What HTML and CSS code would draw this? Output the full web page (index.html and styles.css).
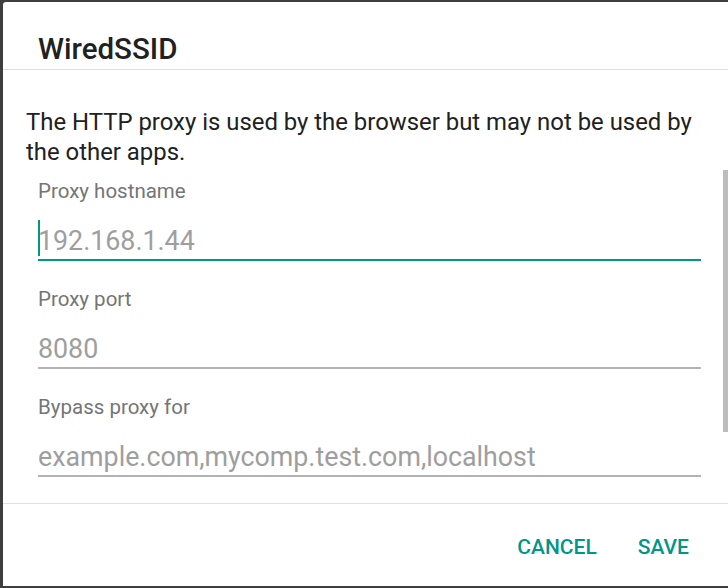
FILE: index.html
```html
<!DOCTYPE html>
<html>
<head>
<meta charset="utf-8">
<link rel="stylesheet" href="styles.css">
</head>
<body>
<div class="dialog">
  <div class="header"><h1 class="title">WiredSSID</h1></div>
  <div class="content">
    <p class="desc">The HTTP proxy is used by the browser but may not be used by the other apps.</p>
    <div class="fields">
      <div class="field">
        <div class="label">Proxy hostname</div>
        <div class="input focused"><span class="cursor"></span><span class="hint">192.168.1.44</span></div>
      </div>
      <div class="field">
        <div class="label">Proxy port</div>
        <div class="input"><span class="hint">8080</span></div>
      </div>
      <div class="field">
        <div class="label">Bypass proxy for</div>
        <div class="input"><span class="hint">example.com,mycomp.test.com,localhost</span></div>
      </div>
    </div>
    <div class="scrollbar"></div>
  </div>
  <div class="footer">
    <button class="btn">CANCEL</button>
    <button class="btn">SAVE</button>
  </div>
</div>
</body>
</html>
```
FILE: styles.css
```css
html, body {
  margin: 0;
  padding: 0;
  height: 100%;
}
body {
  background: #3e3e3e;
  font-family: Roboto, "Noto Sans", sans-serif;
  overflow: hidden;
}
.dialog {
  margin: 2px 0 0 3px;
  height: 584px;
  background: #fff;
  border-top-left-radius: 3px;
  display: flex;
  flex-direction: column;
}
.header {
  flex: none;
  height: 68px;
  box-sizing: border-box;
  border-bottom: 1px solid #e0e0e0;
  padding-left: 35px;
  display: flex;
  align-items: flex-end;
}
.title {
  margin: 0 0 3px;
  font-size: 29.5px;
  font-weight: 500;
  color: #212121;
  line-height: 34px;
}
.content {
  position: relative;
  flex: none;
  height: 434px;
  box-sizing: border-box;
  border-bottom: 1px solid #e0e0e0;
}
.desc {
  margin: 37px 0 0 23px;
  padding-right: 20px;
  font-size: 23.9px;
  line-height: 30px;
  color: #212121;
}
.fields {
  padding: 12px 27px 0 35px;
}
.field {
  margin-bottom: 26px;
}
.label {
  font-size: 20.5px;
  line-height: 24px;
  color: #757575;
}
.input {
  position: relative;
  height: 54px;
  border-bottom: 2px solid #b3b3b3;
  display: flex;
  align-items: flex-end;
  padding-bottom: 2px;
}
.input.focused {
  border-bottom-color: #009688;
}
.hint {
  font-size: 26.8px;
  line-height: 32px;
  color: #9e9e9e;
}
.cursor {
  position: absolute;
  left: 0;
  top: 17px;
  width: 2px;
  height: 36px;
  background: #009688;
}
.scrollbar {
  position: absolute;
  right: 0;
  top: 100px;
  width: 5px;
  height: 262px;
  background: #bdbdbd;
}
.footer {
  flex: none;
  height: 82px;
  box-sizing: border-box;
  padding: 4px 29px 0 0;
  display: flex;
  justify-content: flex-end;
  align-items: center;
  gap: 21px;
}
.btn {
  background: none;
  border: none;
  font-family: Roboto, sans-serif;
  font-size: 21px;
  font-weight: 500;
  color: #009688;
  padding: 8px 10px;
}
```
